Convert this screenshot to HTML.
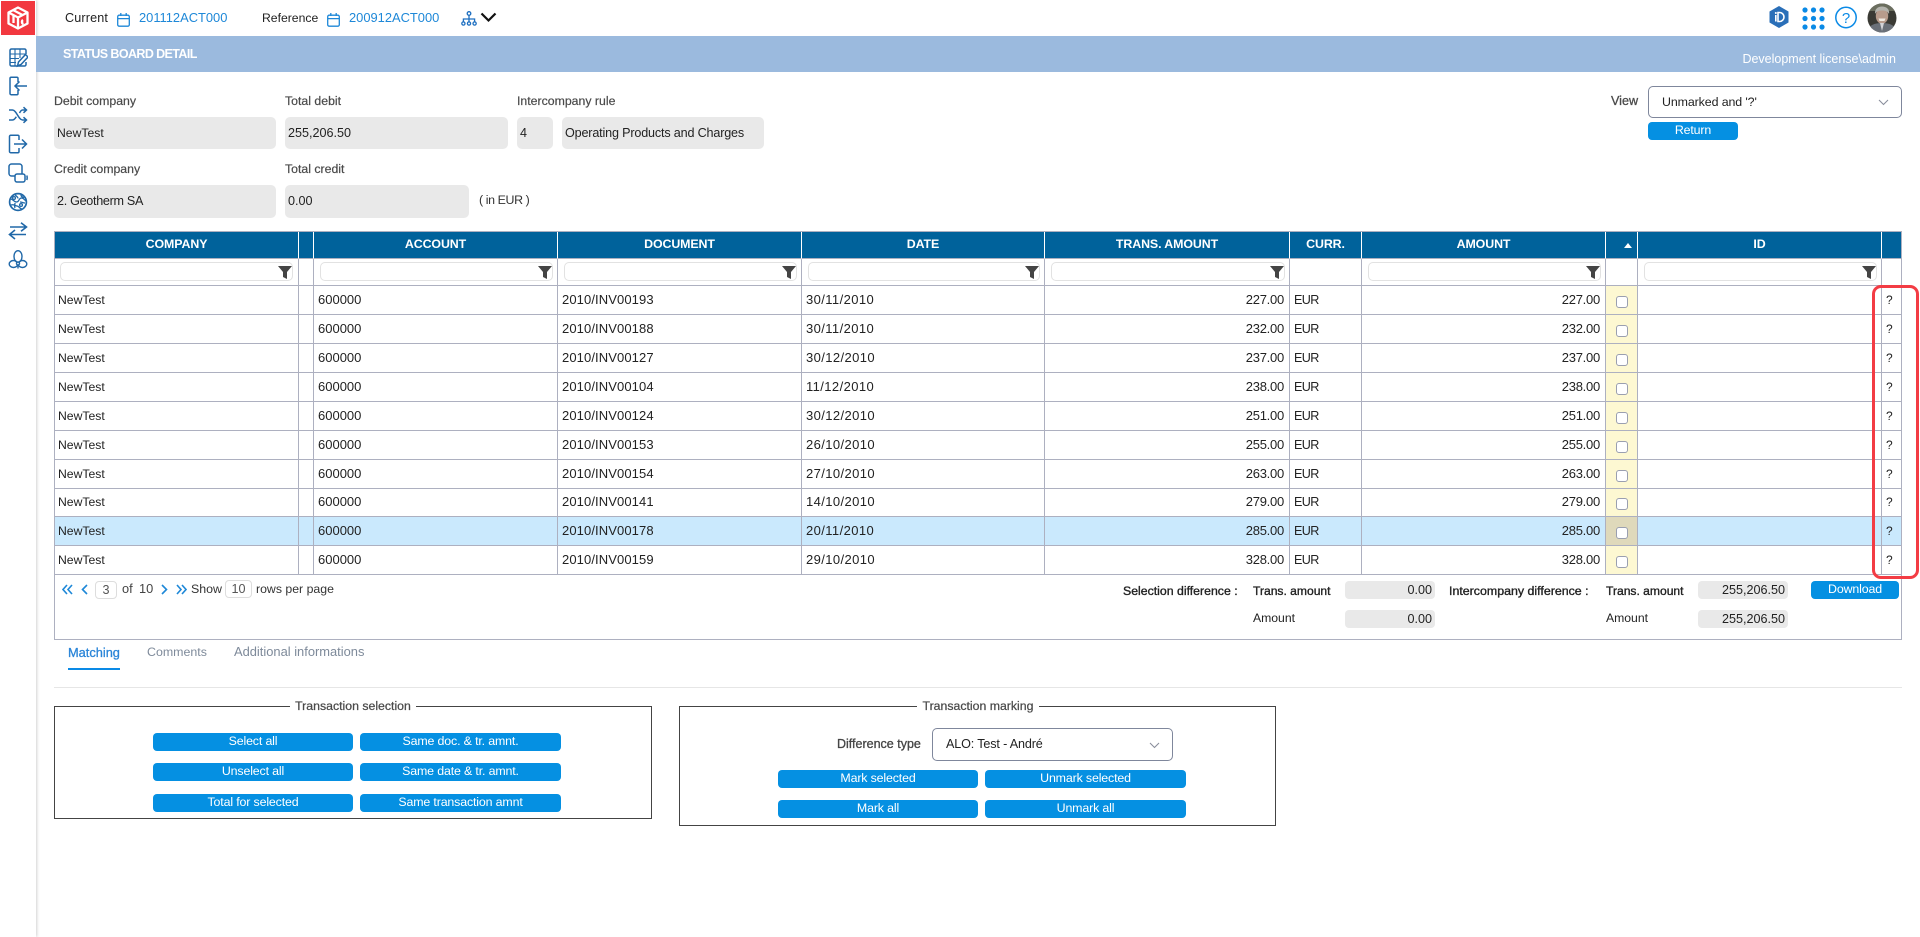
<!DOCTYPE html>
<html><head><meta charset="utf-8"><title>Status Board Detail</title>
<style>
*{box-sizing:border-box}
html,body{margin:0;padding:0;width:1920px;height:937px;overflow:hidden;background:#fff;font-family:"Liberation Sans",sans-serif;font-size:12.5px;color:#222}
.a{position:absolute;white-space:nowrap}
.t{position:absolute;white-space:nowrap;line-height:16px;height:16px}
.lbl{color:#4a4a4a;font-size:12.3px;-webkit-text-stroke:.2px #4a4a4a}
.inp{position:absolute;background:#e9e9e9;border-radius:5px;font-size:12.6px;line-height:32px;padding-left:3px;color:#222}
.btn{position:absolute;background:#0590e2;color:#fff;border-radius:4px;height:18px;line-height:17px;text-align:center;font-size:12.4px;letter-spacing:-.15px}
.sel{position:absolute;border:1px solid #7f879c;border-radius:5px;background:#fff;font-size:12.6px;line-height:31px;padding-left:13px}
.sum{position:absolute;background:#e9e9e9;border-radius:4px;height:18px;line-height:18px;text-align:right;padding-right:3px;width:90px;font-size:12.6px}
.b{font-size:12.2px;color:#222;-webkit-text-stroke:.35px #222}
.pg{position:absolute;border:1px solid #ddd;border-radius:4px;background:#fff;text-align:center;color:#555;font-size:12.6px;line-height:16px;height:18px}
table{position:absolute;left:54px;top:231px;width:1848px;border-collapse:separate;border-spacing:0;table-layout:fixed;border-top:1px solid #adb0c0;border-left:1px solid #adb0c0}
td,th{border-right:1px solid #adb0c0;border-bottom:1px solid #adb0c0;padding:0;overflow:hidden;white-space:nowrap}
th{background:#00629b;color:#fff;font-size:12.4px;letter-spacing:-.1px;height:27px;border-right-color:#fff;padding-bottom:2px}
th:last-child{border-right-color:#adb0c0}
tr.f td{height:27px;position:relative}
tr.r td{height:29px;padding:0 4px 1px;font-size:13px;line-height:14px}
tr.h28 td{height:28px}
tr.r td.c1{font-size:12.2px;padding-left:3px}
td.d{letter-spacing:.1px}
td.dt{letter-spacing:.4px}
tr.r td.n{text-align:right;letter-spacing:-.25px;padding-right:5px}
tr.r td.e{letter-spacing:-.6px;font-size:12.6px}
tr.r td.q{font-size:12px}
tr.r td.ck{background:#fdf8d2;text-align:center;padding:0}
tr.s td{background:#cae9fd}
tr.r.s td.ck{background:#dfd9bb}
i.cb{display:inline-block;width:12px;height:12px;border:1px solid #9a9fb0;border-radius:3px;background:#fff;vertical-align:-4px}
.fi{position:absolute;left:6px;right:4px;top:3px;height:19px;border:1px solid #e2e2e2;border-radius:5px}
td:first-child .fi{left:5px;right:5px}
.fi svg{position:absolute;right:0;top:3px}
.fs{position:absolute;border:1px solid #444}
.leg{position:absolute;background:#fff;text-align:center;color:#4a4a4a;font-size:12.3px;line-height:16px;height:16px;-webkit-text-stroke:.25px #4a4a4a}
.sb svg{position:absolute;left:8px}
</style></head><body>

<!-- top bar -->
<div class="t" style="left:65px;top:10px;font-size:12.6px;letter-spacing:.15px">Current</div>
<svg class="a" style="left:117px;top:13px" width="13" height="14" viewBox="0 0 13 14" fill="none" stroke="#1e88d8" stroke-width="1.3"><rect x=".7" y="2.2" width="11.6" height="11" rx="1.5"/><path d="M.7 5.6h11.6M3.8 0v3M9.2 0v3"/></svg>
<div class="t" style="left:139px;top:10px;color:#1e88d8;font-size:12.9px">201112ACT000</div>
<div class="t" style="left:262px;top:10px;font-size:12.2px">Reference</div>
<svg class="a" style="left:327px;top:13px" width="13" height="14" viewBox="0 0 13 14" fill="none" stroke="#1e88d8" stroke-width="1.3"><rect x=".7" y="2.2" width="11.6" height="11" rx="1.5"/><path d="M.7 5.6h11.6M3.8 0v3M9.2 0v3"/></svg>
<div class="t" style="left:349px;top:10px;color:#1e88d8;font-size:12.9px">200912ACT000</div>
<svg class="a" style="left:461px;top:11px" width="16" height="15" viewBox="0 0 16 15" fill="none" stroke="#1e6fc0" stroke-width="1.3"><circle cx="8" cy="2.5" r="1.8"/><circle cx="2.4" cy="12.5" r="1.6"/><circle cx="8" cy="12.5" r="1.6"/><circle cx="13.6" cy="12.5" r="1.6"/><path d="M8 4.3v6.6M2.4 10.9V8h11.2v2.9"/></svg>
<svg class="a" style="left:480px;top:12px" width="17" height="11" viewBox="0 0 17 11" fill="none" stroke="#111" stroke-width="2.2"><path d="M1.5 1.5 8.5 8.5 15.5 1.5"/></svg>

<svg class="a" style="left:1768px;top:5px" width="22" height="24" viewBox="0 0 22 24"><path d="M11 1 20.5 6.5v11L11 23 1.5 17.5v-11z" fill="#2a6fb8"/><path d="M10 7.5h1.5a4.5 4.5 0 0 1 0 9H10z" fill="none" stroke="#fff" stroke-width="1.6"/><rect x="7" y="10" width="1.6" height="6.5" fill="#fff"/><circle cx="7.8" cy="8" r="1" fill="#fff"/></svg>
<svg class="a" style="left:1802px;top:7px" width="23" height="23" viewBox="0 0 23 23" fill="#0a8ae6"><circle cx="3" cy="3" r="2.6"/><circle cx="11.5" cy="3" r="2.6"/><circle cx="20" cy="3" r="2.6"/><circle cx="3" cy="11.5" r="2.6"/><circle cx="11.5" cy="11.5" r="2.6"/><circle cx="20" cy="11.5" r="2.6"/><circle cx="3" cy="20" r="2.6"/><circle cx="11.5" cy="20" r="2.6"/><circle cx="20" cy="20" r="2.6"/></svg>
<svg class="a" style="left:1834px;top:6px" width="24" height="23" viewBox="0 0 24 23"><circle cx="12" cy="11.5" r="10.2" fill="none" stroke="#0a8ae6" stroke-width="1.5"/><text x="12" y="16.8" text-anchor="middle" font-family="Liberation Sans" font-size="15" fill="#0a8ae6">?</text></svg>
<svg class="a" style="left:1867px;top:3px" width="30" height="30" viewBox="0 0 30 30"><defs><clipPath id="av"><circle cx="15" cy="15" r="14.5"/></clipPath></defs><g clip-path="url(#av)"><rect width="30" height="30" fill="#3a3a34"/><rect width="30" height="8" fill="#6b6e5f"/><path d="M0 30c1-7 6-10 15-10s14 3 15 10z" fill="#6a7078"/><ellipse cx="15" cy="13" rx="6.2" ry="7.8" fill="#b89c8c"/><path d="M8 11c-.5-5 3-7.5 7-7.5s8 2.500 7 7.500c-1.500-3-4-3.500-7-3.500s-5.500.5-7 3.500z" fill="#b4b4ae"/><path d="M11.500 15.500h7l-1 2.500h-5z" fill="#efe9e0"/><path d="M13 20l2 8 2-8z" fill="#d4d4d8"/></g></svg>

<!-- sidebar -->
<div class="a" style="left:0;top:0;width:36px;height:937px;background:#fff;box-shadow:1px 0 3px rgba(0,0,0,.18)"></div>
<div class="a" style="left:1px;top:1px;width:34px;height:34px;background:#f2383f"></div>
<svg class="a" style="left:7px;top:6px" width="22" height="24" viewBox="0 0 22 24" fill="none" stroke="#fff" stroke-width="2.3"><path d="M11 1.500 20.500 6.500V17.500L11 22.500 1.500 17.500V6.500z" stroke-linejoin="round"/><path d="M1.500 6.500 11 11.500 20.500 6.500M11 11.500V22.500M6 4l9.500 5M6.500 9v8M16 14c-1.500 1-1.500 3.500.5 4"/></svg>
<div class="sb" style="position:absolute;left:0;top:0">
<svg style="top:48px" width="20" height="20" viewBox="0 0 20 20" fill="none" stroke="#2068a8" stroke-width="1.3"><path d="M18 6V2.500a1.500 1.500 0 0 0-1.500-1.500h-13A1.500 1.500 0 0 0 2 2.500v14A1.500 1.500 0 0 0 3.500 18h13a1.500 1.500 0 0 0 1.500-1.500V14" stroke-width="1.5"/><path d="M2 6h15M2 10.500h9M2 14.500h6M7 1v17M12 1v9" stroke-width="1.1"/><path d="M9.500 18l1-4 7-7.500 2.500 2.500-7 7.500z" fill="#fff" stroke-width="1.5"/></svg>
<svg style="top:76px" width="20" height="20" viewBox="0 0 20 20" fill="none" stroke="#2068a8" stroke-width="1.5"><path d="M10 6V2.500a1.200 1.200 0 0 0-1.200-1.200H3.200A1.200 1.200 0 0 0 2 2.500v15a1.200 1.200 0 0 0 1.200 1.200h5.600a1.200 1.200 0 0 0 1.200-1.200V14"/><path d="M19 10H7M11.500 5.500 7 10l4.500 4.500"/></svg>
<svg style="top:106px" width="20" height="18" viewBox="0 0 20 18" fill="none" stroke="#2068a8" stroke-width="1.5"><path d="M1 4h3.500c4 0 6 10 10 10H18M1 14h3.500c1.500 0 2.800-1.500 3.800-3.200M11.500 7c.8-1.500 1.800-3 3-3H18M15.500 1.200 18.500 4l-3 2.800M15.500 11.200l3 2.800-3 2.800"/></svg>
<svg style="top:134px" width="20" height="20" viewBox="0 0 20 20" fill="none" stroke="#2068a8" stroke-width="1.5"><path d="M11 6V2.500a1.200 1.200 0 0 0-1.200-1.200H2.700a1.200 1.200 0 0 0-1.200 1.200v15a1.200 1.200 0 0 0 1.200 1.200h7.100a1.200 1.200 0 0 0 1.200-1.200V14"/><path d="M6 10h12.500M14 5.500l4.500 4.500-4.500 4.500"/></svg>
<svg style="top:163px" width="20" height="20" viewBox="0 0 20 20" fill="none" stroke="#2068a8" stroke-width="1.5"><rect x="1" y="1" width="13" height="12" rx="2.500"/><rect x="7" y="11" width="10" height="8" rx="2" fill="#fff"/><path d="M18.800 12.500c.5 1.500.5 3 0 4.500"/></svg>
<svg style="top:192px" width="20" height="20" viewBox="0 0 20 20" fill="none" stroke="#2068a8" stroke-width="1.3"><circle cx="10" cy="10" r="8.400" stroke-width="1.7"/><path d="M2.500 7c3 0 3 3 6 3s2-4 5-4 3 3 5 3M3 13c3-1 4 1 6 1s3 3 5 3M7 2.500c1 2 3 2 3 4M12 10c2 0 3 1 5 1M7 11c0 2-1 3 0 5M13 3c0 2 2 2 3 3"/><circle cx="6" cy="6" r="1.400"/><circle cx="13" cy="13" r="1.400"/></svg>
<svg style="top:222px" width="20" height="18" viewBox="0 0 20 18" fill="none" stroke="#2068a8" stroke-width="1.6"><path d="M2 5h16.500M13 .7l5.500 4.300-5.500 4.300M18 12.500H1.500M7 8l-5.500 4.500L7 17"/></svg>
<svg style="top:250px" width="20" height="20" viewBox="0 0 20 20" fill="none" stroke="#2068a8" stroke-width="1.4"><ellipse cx="10" cy="6.500" rx="4" ry="5.800"/><ellipse cx="5.500" cy="14" rx="4.300" ry="3.500"/><ellipse cx="14.500" cy="14" rx="4.300" ry="3.500"/><circle cx="10" cy="13.500" r="1.500" fill="#fff"/><path d="M10 15v3.500"/></svg>
</div>

<!-- title bar -->
<div class="a" style="left:36px;top:36px;width:1884px;height:36px;background:#9bbade"></div>
<div class="t" style="left:63px;top:46px;color:#fff;font-weight:bold;font-size:12.5px;letter-spacing:-.6px">STATUS BOARD DETAIL</div>
<div class="t" style="left:1736px;top:51px;color:#fff;font-size:12.5px;width:160px;text-align:right">Development license\admin</div>

<!-- form -->
<div class="t lbl" style="left:54px;top:93px">Debit company</div>
<div class="t lbl" style="left:285px;top:93px">Total debit</div>
<div class="t lbl" style="left:517px;top:93px">Intercompany rule</div>
<div class="inp" style="left:54px;top:117px;width:222px;height:32px;font-size:12.2px">NewTest</div>
<div class="inp" style="left:285px;top:117px;width:223px;height:32px">255,206.50</div>
<div class="inp" style="left:517px;top:117px;width:36px;height:32px">4</div>
<div class="inp" style="left:562px;top:117px;width:202px;height:32px;letter-spacing:-.17px">Operating Products and Charges</div>
<div class="t lbl" style="left:54px;top:161px">Credit company</div>
<div class="t lbl" style="left:285px;top:161px">Total credit</div>
<div class="inp" style="left:54px;top:185px;width:222px;height:33px;letter-spacing:-.3px">2. Geotherm SA</div>
<div class="inp" style="left:285px;top:185px;width:184px;height:33px">0.00</div>
<div class="t" style="left:479px;top:192px;color:#333;font-size:12.4px;letter-spacing:-.4px">( in EUR )</div>

<div class="t lbl" style="left:1611px;top:93px;font-size:12.6px;-webkit-text-stroke:.3px #4a4a4a">View</div>
<div class="sel" style="left:1648px;top:86px;width:254px;height:32px;font-size:12.4px;letter-spacing:-.1px">Unmarked and '?'</div>
<svg class="a" style="left:1878px;top:99px" width="11" height="7" viewBox="0 0 11 7" fill="none" stroke="#8a8f9c" stroke-width="1.1"><path d="M1 1l4.500 4.500L10 1"/></svg>
<div class="btn" style="left:1648px;top:122px;width:90px">Return</div>

<!-- grid frame -->
<div class="a" style="left:54px;top:574px;width:1848px;height:66px;border:1px solid #adb0c0;border-top:0"></div>

<table>
<colgroup><col style="width:244px"><col style="width:15px"><col style="width:244px"><col style="width:244px"><col style="width:243px"><col style="width:245px"><col style="width:72px"><col style="width:244px"><col style="width:32px"><col style="width:244px"><col style="width:20px"></colgroup>
<tr><th>COMPANY</th><th></th><th>ACCOUNT</th><th>DOCUMENT</th><th>DATE</th><th>TRANS. AMOUNT</th><th>CURR.</th><th>AMOUNT</th><th style="text-align:right;padding-right:5px"><svg width="8" height="5" viewBox="0 0 8 5"><path d="M0 5 4 0l4 5z" fill="#fff"/></svg></th><th>ID</th><th></th></tr>
<tr class="f"><td><div class="fi"><svg width="14" height="13" viewBox="0 0 14 13"><path d="M0 0h14L9 6v7L5 11V6z" fill="#444"/></svg></div></td><td></td><td><div class="fi"><svg width="14" height="13" viewBox="0 0 14 13"><path d="M0 0h14L9 6v7L5 11V6z" fill="#444"/></svg></div></td><td><div class="fi"><svg width="14" height="13" viewBox="0 0 14 13"><path d="M0 0h14L9 6v7L5 11V6z" fill="#444"/></svg></div></td><td><div class="fi"><svg width="14" height="13" viewBox="0 0 14 13"><path d="M0 0h14L9 6v7L5 11V6z" fill="#444"/></svg></div></td><td><div class="fi"><svg width="14" height="13" viewBox="0 0 14 13"><path d="M0 0h14L9 6v7L5 11V6z" fill="#444"/></svg></div></td><td></td><td><div class="fi"><svg width="14" height="13" viewBox="0 0 14 13"><path d="M0 0h14L9 6v7L5 11V6z" fill="#444"/></svg></div></td><td></td><td><div class="fi"><svg width="14" height="13" viewBox="0 0 14 13"><path d="M0 0h14L9 6v7L5 11V6z" fill="#444"/></svg></div></td><td></td></tr>
<tr class="r"><td class="c1">NewTest</td><td></td><td>600000</td><td class="d">2010/INV00193</td><td class="dt">30/11/2010</td><td class="n">227.00</td><td class="e">EUR</td><td class="n">227.00</td><td class="ck"><i class="cb"></i></td><td></td><td class="q">?</td></tr>
<tr class="r"><td class="c1">NewTest</td><td></td><td>600000</td><td class="d">2010/INV00188</td><td class="dt">30/11/2010</td><td class="n">232.00</td><td class="e">EUR</td><td class="n">232.00</td><td class="ck"><i class="cb"></i></td><td></td><td class="q">?</td></tr>
<tr class="r"><td class="c1">NewTest</td><td></td><td>600000</td><td class="d">2010/INV00127</td><td class="dt">30/12/2010</td><td class="n">237.00</td><td class="e">EUR</td><td class="n">237.00</td><td class="ck"><i class="cb"></i></td><td></td><td class="q">?</td></tr>
<tr class="r"><td class="c1">NewTest</td><td></td><td>600000</td><td class="d">2010/INV00104</td><td class="dt">11/12/2010</td><td class="n">238.00</td><td class="e">EUR</td><td class="n">238.00</td><td class="ck"><i class="cb"></i></td><td></td><td class="q">?</td></tr>
<tr class="r"><td class="c1">NewTest</td><td></td><td>600000</td><td class="d">2010/INV00124</td><td class="dt">30/12/2010</td><td class="n">251.00</td><td class="e">EUR</td><td class="n">251.00</td><td class="ck"><i class="cb"></i></td><td></td><td class="q">?</td></tr>
<tr class="r"><td class="c1">NewTest</td><td></td><td>600000</td><td class="d">2010/INV00153</td><td class="dt">26/10/2010</td><td class="n">255.00</td><td class="e">EUR</td><td class="n">255.00</td><td class="ck"><i class="cb"></i></td><td></td><td class="q">?</td></tr>
<tr class="r"><td class="c1">NewTest</td><td></td><td>600000</td><td class="d">2010/INV00154</td><td class="dt">27/10/2010</td><td class="n">263.00</td><td class="e">EUR</td><td class="n">263.00</td><td class="ck"><i class="cb"></i></td><td></td><td class="q">?</td></tr>
<tr class="r h28"><td class="c1">NewTest</td><td></td><td>600000</td><td class="d">2010/INV00141</td><td class="dt">14/10/2010</td><td class="n">279.00</td><td class="e">EUR</td><td class="n">279.00</td><td class="ck"><i class="cb"></i></td><td></td><td class="q">?</td></tr>
<tr class="r s"><td class="c1">NewTest</td><td></td><td>600000</td><td class="d">2010/INV00178</td><td class="dt">20/11/2010</td><td class="n">285.00</td><td class="e">EUR</td><td class="n">285.00</td><td class="ck"><i class="cb"></i></td><td></td><td class="q">?</td></tr>
<tr class="r"><td class="c1">NewTest</td><td></td><td>600000</td><td class="d">2010/INV00159</td><td class="dt">29/10/2010</td><td class="n">328.00</td><td class="e">EUR</td><td class="n">328.00</td><td class="ck"><i class="cb"></i></td><td></td><td class="q">?</td></tr>
</table>

<!-- red highlight -->
<div class="a" style="left:1872px;top:285px;width:47px;height:294px;border:3px solid #f33c44;border-radius:9px"></div>

<!-- pagination -->
<svg class="a" style="left:62px;top:584px" width="11" height="11" viewBox="0 0 11 11" fill="none" stroke="#1e88d8" stroke-width="1.6"><path d="M5 1 1 5.500 5 10M10 1 6 5.500 10 10"/></svg>
<svg class="a" style="left:81px;top:584px" width="7" height="11" viewBox="0 0 7 11" fill="none" stroke="#1e88d8" stroke-width="1.6"><path d="M6 1 1.500 5.500 6 10"/></svg>
<div class="pg" style="left:95px;top:581px;width:22px">3</div>
<div class="t" style="left:122px;top:581px;color:#444;font-size:12.8px">of</div>
<div class="t" style="left:139px;top:581px;color:#444;font-size:12.8px">10</div>
<svg class="a" style="left:161px;top:584px" width="7" height="11" viewBox="0 0 7 11" fill="none" stroke="#1e88d8" stroke-width="1.6"><path d="M1 1l4.500 4.500L1 10"/></svg>
<svg class="a" style="left:176px;top:584px" width="11" height="11" viewBox="0 0 11 11" fill="none" stroke="#1e88d8" stroke-width="1.6"><path d="M1 1l4 4.500L1 10M6 1l4 4.500L6 10"/></svg>
<div class="t" style="left:191px;top:581px;color:#333;font-size:12.4px">Show</div>
<div class="pg" style="left:225px;top:580px;width:27px">10</div>
<div class="t" style="left:256px;top:581px;color:#333;font-size:12.3px">rows per page</div>

<!-- summary -->
<div class="t b" style="left:1123px;top:583px;font-size:12.3px">Selection difference :</div>
<div class="t b" style="left:1253px;top:583px;font-size:12.1px">Trans. amount</div>
<div class="sum" style="left:1345px;top:581px">0.00</div>
<div class="t b" style="left:1449px;top:583px;font-size:12.4px">Intercompany difference :</div>
<div class="t b" style="left:1606px;top:583px;font-size:12.1px">Trans. amount</div>
<div class="sum" style="left:1698px;top:581px">255,206.50</div>
<div class="btn" style="left:1811px;top:581px;width:88px">Download</div>
<div class="t" style="left:1253px;top:610px;font-size:12.2px">Amount</div>
<div class="sum" style="left:1345px;top:610px">0.00</div>
<div class="t" style="left:1606px;top:610px;font-size:12.2px">Amount</div>
<div class="sum" style="left:1698px;top:610px">255,206.50</div>

<!-- tabs -->
<div class="t" style="left:68px;top:645px;color:#2a85d8;font-size:12.8px;-webkit-text-stroke:.3px #2a85d8">Matching</div>
<div class="a" style="left:68px;top:667.5px;width:52px;height:2px;background:#0a8ae6"></div>
<div class="t" style="left:147px;top:644px;color:#7e8a9a;font-size:12.4px">Comments</div>
<div class="t" style="left:234px;top:644px;color:#7e8a9a;font-size:12.9px">Additional informations</div>
<div class="a" style="left:54px;top:687px;width:1848px;height:1px;background:#e6e6e6"></div>

<!-- transaction selection -->
<div class="fs" style="left:54px;top:706px;width:598px;height:113px"></div>
<div class="leg" style="left:290px;top:698px;width:126px">Transaction selection</div>
<div class="btn" style="left:153px;top:733px;width:200px">Select all</div>
<div class="btn" style="left:360px;top:733px;width:201px">Same doc. &amp; tr. amnt.</div>
<div class="btn" style="left:153px;top:763px;width:200px">Unselect all</div>
<div class="btn" style="left:360px;top:763px;width:201px">Same date &amp; tr. amnt.</div>
<div class="btn" style="left:153px;top:794px;width:200px">Total for selected</div>
<div class="btn" style="left:360px;top:794px;width:201px">Same transaction amnt</div>

<!-- transaction marking -->
<div class="fs" style="left:679px;top:706px;width:597px;height:120px"></div>
<div class="leg" style="left:917px;top:698px;width:122px">Transaction marking</div>
<div class="t" style="left:837px;top:736px;color:#444;font-size:12.5px;-webkit-text-stroke:.3px #444">Difference type</div>
<div class="sel" style="left:932px;top:728px;width:241px;height:33px;letter-spacing:-.15px">ALO: Test - André</div>
<svg class="a" style="left:1149px;top:742px" width="11" height="7" viewBox="0 0 11 7" fill="none" stroke="#8a8f9c" stroke-width="1.1"><path d="M1 1l4.500 4.500L10 1"/></svg>
<div class="btn" style="left:778px;top:770px;width:200px">Mark selected</div>
<div class="btn" style="left:985px;top:770px;width:201px">Unmark selected</div>
<div class="btn" style="left:778px;top:800px;width:200px">Mark all</div>
<div class="btn" style="left:985px;top:800px;width:201px">Unmark all</div>

</body></html>
